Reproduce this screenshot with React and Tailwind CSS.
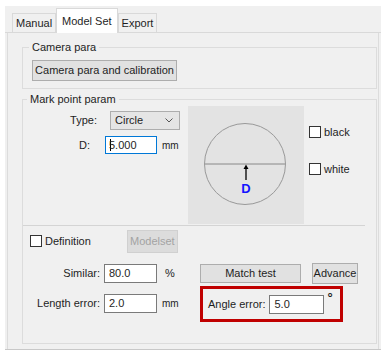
import React from "react";

const Field = ({ value, className = "", focused = false }) => (
    <div
        className={
            "flex items-center bg-white border pl-[4px] text-[11px] text-[#1e1e1e] " +
            (focused ? "border-[#0078d7] " : "border-[#7a7a7a] ") +
            className
        }
    >
        {focused && <span className="w-px h-[12px] bg-black -mr-[2px]" />}
        <span>{value}</span>
    </div>
);

const Check = ({ label }) => (
    <div className="flex items-center">
        <div className="w-[12px] h-[12px] border border-[#333] bg-white" />
        <span className="ml-[3px]">{label}</span>
    </div>
);

const Tab = ({ label, active }) =>
    active ? (
        <div className="h-[25px] px-[5px] flex items-center bg-white border border-b-0 border-[#d9d9d9] -mb-px relative">
            {label}
        </div>
    ) : (
        <div className="h-[19px] px-[3px] flex items-center border border-b-0 border-[#d9d9d9]">
            {label}
        </div>
    );

const App = () => {
    return (
        <div className="w-[383px] h-[358px] bg-white pt-[6px] pl-[5px] pr-[2px] font-['Liberation_Sans',Arial,sans-serif] text-[11px] text-[#1e1e1e]">
            <div className="h-[344px] bg-[#f0f0f0] border-b border-[#c8c8c8] flex flex-col">
                {/* tabs */}
                <div className="h-[27px] flex items-end pl-[7px] border-b border-[#d9d9d9]">
                    <Tab label="Manual" />
                    <Tab label="Model Set" active />
                    <Tab label="Export" />
                </div>

                <div className="flex-1 mx-[2px] border-x border-[#dcdcdc] pl-[14px] pr-[1px] pt-[8px]">
                    {/* Camera para */}
                    <fieldset className="border border-[#dcdcdc] pl-[9px] pt-[6px] pb-[7px]">
                        <legend className="ml-[-3px] px-[3px] leading-[13px]">Camera para</legend>
                        <button className="w-[145px] h-[21px] bg-[#e1e1e1] border border-[#adadad] text-[11px]">
                            Camera para and calibration
                        </button>
                    </fieldset>

                    {/* Mark point param */}
                    <fieldset className="mt-[4px] h-[251px] border border-[#dcdcdc]">
                        <legend className="ml-[4px] px-[3px] leading-[13px]">Mark point param</legend>

                        <div className="flex h-[119px]">
                            <div className="w-[165px] pt-[5px]">
                                <div className="flex items-center">
                                    <span className="w-[74px] text-right">Type:</span>
                                    <div className="ml-[13px] w-[70px] h-[19px] bg-[#e5e5e5] border border-[#adadad] flex items-center justify-between pl-[4px] pr-[6px]">
                                        <span>Circle</span>
                                        <svg width="8" height="5" viewBox="0 0 8 5">
                                            <path d="M0.5 0.5 L4 4 L7.5 0.5" stroke="#555" fill="none" strokeWidth="1" />
                                        </svg>
                                    </div>
                                </div>
                                <div className="flex items-center mt-[6px]">
                                    <span className="w-[67px] text-right">D:</span>
                                    <Field value="5.000" focused className="ml-[15px] w-[52px] h-[18px]" />
                                    <span className="ml-[5px] text-[10px]">mm</span>
                                </div>
                            </div>

                            <div className="w-[116px] h-[118px] bg-[#e3e3e3] flex items-center justify-center">
                                <svg width="116" height="118" viewBox="0 0 116 118">
                                    <circle cx="57" cy="58" r="40.5" fill="none" stroke="#999" strokeWidth="1" />
                                    <line x1="17" y1="58" x2="97" y2="58" stroke="#888" strokeWidth="1" />
                                    <line x1="58" y1="62" x2="58" y2="74" stroke="#000" strokeWidth="1.3" />
                                    <path d="M55.5 63 L58 58.5 L60.5 63 Z" fill="#000" />
                                    <text x="58" y="87" textAnchor="middle" fill="#1515ff" fontSize="13" fontWeight="bold" fontFamily="Liberation Sans, Arial, sans-serif">D</text>
                                </svg>
                            </div>

                            <div className="pl-[5px] pt-[18px] flex flex-col gap-[20px]">
                                <Check label="black" />
                                <Check label="white" />
                            </div>
                        </div>

                        <div className="border-t border-[#d4d4d4] mr-[11px]" />

                        <div className="flex items-center mt-[3px] h-[24px]">
                            <div className="ml-[7px]">
                                <Check label="Definition" />
                            </div>
                            <div className="ml-[36px] w-[51px] h-[23px] bg-[#dcdcdc] border border-[#d0d0d0] text-[#a3a3a3] flex items-center justify-center">
                                Modelset
                            </div>
                        </div>

                        <div className="flex mt-[10px]">
                            <div className="w-[177px]">
                                <div className="flex items-center mt-[1px]">
                                    <span className="w-[77px] text-right">Similar:</span>
                                    <Field value="80.0" className="ml-[4px] w-[53px] h-[19px]" />
                                    <span className="ml-[8px]">%</span>
                                </div>
                                <div className="flex items-center mt-[11px]">
                                    <span className="w-[77px] text-right">Length error:</span>
                                    <Field value="2.0" className="ml-[4px] w-[53px] h-[19px]" />
                                    <span className="ml-[5px] text-[10px]">mm</span>
                                </div>
                            </div>
                            <div>
                                <div className="flex items-center">
                                    <button className="w-[101px] h-[19px] bg-[#e1e1e1] border border-[#adadad] text-[11px]">
                                        Match test
                                    </button>
                                    <button className="ml-[11px] w-[46px] h-[21px] bg-[#e1e1e1] border border-[#adadad] text-[11px]">
                                        Advance
                                    </button>
                                </div>
                                <div className="mt-[2px] w-[143px] h-[36px] border-[3px] border-[#c00000] flex items-center pl-[5px]">
                                    <span>Angle error:</span>
                                    <Field value="5.0" className="ml-[4px] w-[55px] h-[19px]" />
                                    <span className="ml-[3px] self-start mt-[2px] text-[13px] font-bold leading-none">°</span>
                                </div>
                            </div>
                        </div>
                    </fieldset>
                </div>
            </div>
        </div>
    );
};

export default App;
